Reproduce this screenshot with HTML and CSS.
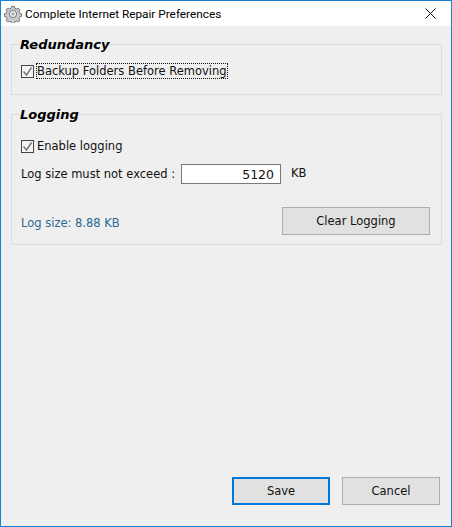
FILE: index.html
```html
<!DOCTYPE html>
<html lang="en">
<head>
    <meta charset="UTF-8">
    <title>Complete Internet Repair Preferences</title>
    <link rel="stylesheet" href="styles.css">
</head>
<body>
    <div class="window">
        <div class="title-bar">
            <svg class="app-icon" width="18" height="18" viewBox="0 0 18 18">
                <path d="M7.500 1h3l.5 2 1.600.7 1.800-1 2 2.100-1 1.800.7 1.600 2 .5v3l-2 .5-.7 1.600 1 1.800-2 2-1.800-1-1.600.7-.5 2h-3l-.5-2-1.600-.7-1.800 1-2-2 1-1.800-.7-1.600-2-.5v-3l2-.5.7-1.600-1-1.800 2-2.100 1.800 1 1.600-.7z" transform="translate(.5 .5) scale(.94)" fill="#c9c9c9" stroke="#6e6e6e" stroke-width="1"/>
                <circle cx="9" cy="9" r="3.600" fill="#f2f2f2" stroke="#777" stroke-width="1"/>
                <circle cx="9" cy="9" r="1.500" fill="#a5a5a5"/>
            </svg>
            <span class="title-text">Complete Internet Repair Preferences</span>
            <svg class="close-icon" width="11" height="11" viewBox="0 0 11 11">
                <path d="M.5.500l10 10M10.500.500l-10 10" stroke="#111" stroke-width="1" fill="none"/>
            </svg>
        </div>

        <div class="content">
            <fieldset class="group group-redundancy">
                <legend>Redundancy</legend>
                <label class="check-row">
                    <span class="checkbox"><svg width="13" height="13" viewBox="0 0 13 13"><path d="M2.500 6.500l3 3.500 5-7.500" stroke="#777" stroke-width="1.500" fill="none"/></svg></span>
                    <span class="focused">Backup Folders Before Removing</span>
                </label>
            </fieldset>

            <fieldset class="group group-logging">
                <legend>Logging</legend>
                <label class="check-row">
                    <span class="checkbox"><svg width="13" height="13" viewBox="0 0 13 13"><path d="M2.500 6.500l3 3.500 5-7.500" stroke="#777" stroke-width="1.500" fill="none"/></svg></span>
                    <span>Enable logging</span>
                </label>
                <div class="size-row">
                    <span class="size-label">Log size must not exceed :</span>
                    <input class="size-input" type="text" value="5120">
                    <span class="size-unit">KB</span>
                </div>
                <div class="clear-row">
                    <span class="log-size">Log size: 8.88 KB</span>
                    <button class="btn btn-clear">Clear Logging</button>
                </div>
            </fieldset>
        </div>

        <div class="footer">
            <button class="btn btn-save">Save</button>
            <button class="btn">Cancel</button>
        </div>
    </div>
</body>
</html>
```

FILE: styles.css
```css
* {
    margin: 0;
    padding: 0;
    box-sizing: border-box;
    font-family: 'DejaVu Sans', Verdana, sans-serif;
}

body {
    width: 452px;
    height: 527px;
    overflow: hidden;
    background: #f0f0f0;
    color: #111;
    font-size: 11.5px;
}

.window {
    display: flex;
    flex-direction: column;
    height: 527px;
    border: 1px solid #1a80d0;
    background: #efefef;
}

.title-bar {
    display: flex;
    align-items: center;
    flex: none;
    height: 25px;
    padding: 0 15px 0 3px;
    background: #fff;
}

.app-icon {
    flex: none;
}

.title-text {
    margin-left: 3px;
    font-family: 'Roboto', sans-serif;
    font-size: 11.8px;
    color: #000;
}

.close-icon {
    margin-left: auto;
}

.content {
    padding: 9px 10px 0;
}

.group {
    width: 431px;
    border: 1px solid #dcdcdc;
    padding: 0 9px;
}

.group legend {
    margin-left: -1px;
    padding-top: 2px;
    font-size: 13px;
    font-weight: bold;
    font-style: italic;
    line-height: 16px;
    color: #000;
}

.group-redundancy {
    height: 60px;
}

.group-logging {
    height: 140px;
    margin-top: 10px;
}

.check-row {
    display: flex;
    align-items: center;
    height: 16px;
}

.group-redundancy .check-row {
    margin-top: 10px;
}

.group-logging .check-row {
    margin-top: 15px;
}

.checkbox {
    display: flex;
    flex: none;
    width: 13px;
    height: 13px;
    margin-right: 3px;
    border: 1px solid #444;
    background: #f4f4f4;
}

.checkbox svg {
    flex: none;
    margin: -1px;
}

.focused {
    outline: 1px dotted #111;
    outline-offset: 0;
}

.size-row {
    display: flex;
    align-items: center;
    margin-top: 10px;
    height: 20px;
}

.size-label {
    width: 160px;
}

.size-input {
    width: 100px;
    height: 20px;
    padding: 0 6px;
    border: 1px solid #7a7a7a;
    background: #fff;
    color: #111;
    font-size: 12.5px;
    text-align: right;
}

.size-unit {
    margin-left: 10px;
    margin-top: -3px;
}

.clear-row {
    display: flex;
    align-items: center;
    justify-content: space-between;
    margin-top: 23px;
    padding-right: 2px;
}

.log-size {
    padding-top: 4px;
    color: #2b6a94;
}

.btn {
    width: 98px;
    height: 28px;
    border: 1px solid #adadad;
    background: #e1e1e1;
    color: #111;
    font-size: 11.5px;
}

.btn-clear {
    width: 148px;
}

.btn-save {
    border: 2px solid #0078d7;
}

.footer {
    display: flex;
    justify-content: flex-end;
    gap: 12px;
    margin-top: auto;
    padding: 0 11px 21px 0;
}
```
